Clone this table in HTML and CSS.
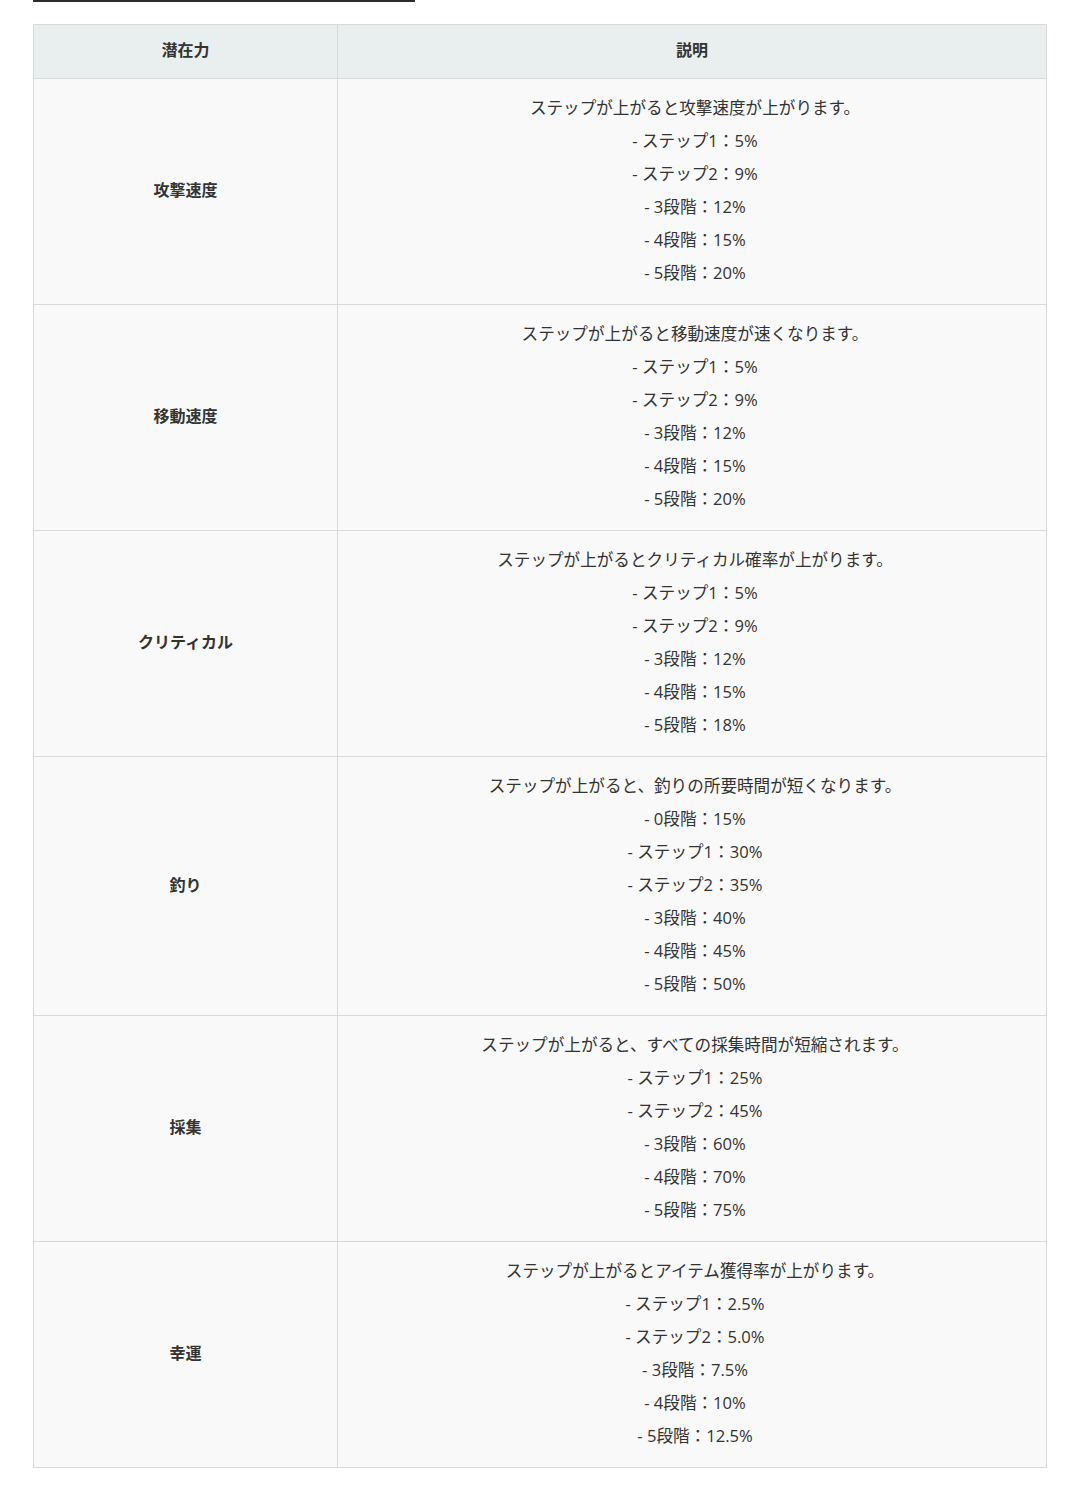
FILE: index.html
```html
<!DOCTYPE html>
<html lang="ja">
<head>
<meta charset="utf-8">
<link rel="stylesheet" href="styles.css">
</head>
<body>
<div class="page">
  <div class="rule"></div>
  <table class="pot">
    <colgroup><col class="c1"><col class="c2"></colgroup>
    <thead>
      <tr><th>潜在力</th><th>説明</th></tr>
    </thead>
    <tbody>
      <tr><td class="name">攻撃速度</td><td class="desc">ステップが上がると攻撃速度が上がります。<br>- ステップ1：5%<br>- ステップ2：9%<br>- 3段階：12%<br>- 4段階：15%<br>- 5段階：20%</td></tr>
      <tr><td class="name">移動速度</td><td class="desc">ステップが上がると移動速度が速くなります。<br>- ステップ1：5%<br>- ステップ2：9%<br>- 3段階：12%<br>- 4段階：15%<br>- 5段階：20%</td></tr>
      <tr><td class="name">クリティカル</td><td class="desc">ステップが上がるとクリティカル確率が上がります。<br>- ステップ1：5%<br>- ステップ2：9%<br>- 3段階：12%<br>- 4段階：15%<br>- 5段階：18%</td></tr>
      <tr><td class="name">釣り</td><td class="desc">ステップが上がると、釣りの所要時間が短くなります。<br>- 0段階：15%<br>- ステップ1：30%<br>- ステップ2：35%<br>- 3段階：40%<br>- 4段階：45%<br>- 5段階：50%</td></tr>
      <tr><td class="name">採集</td><td class="desc">ステップが上がると、すべての採集時間が短縮されます。<br>- ステップ1：25%<br>- ステップ2：45%<br>- 3段階：60%<br>- 4段階：70%<br>- 5段階：75%</td></tr>
      <tr><td class="name">幸運</td><td class="desc">ステップが上がるとアイテム獲得率が上がります。<br>- ステップ1：2.5%<br>- ステップ2：5.0%<br>- 3段階：7.5%<br>- 4段階：10%<br>- 5段階：12.5%</td></tr>
    </tbody>
  </table>
</div>
</body>
</html>
```

FILE: styles.css
```css
html, body {
  margin: 0;
  padding: 0;
  background: #ffffff;
}
body {
  font-family: "Open Sans", "Noto Sans CJK JP", sans-serif;
  color: #333333;
  font-size: 16px;
}
.page {
  padding: 0 34px 0 33px;
}
.rule {
  width: 382px;
  height: 2px;
  background: #2b2b2b;
  margin-bottom: 22px;
}
.pot {
  width: 1014px;
  border-collapse: collapse;
  table-layout: fixed;
}
.c1 { width: 304px; }
.c2 { width: 709px; }
.pot th, .pot td {
  border: 1px solid #d9d9d9;
  text-align: center;
  vertical-align: middle;
}
.pot th {
  background: #e9eeee;
  font-weight: 700;
  height: 50px;
  padding: 0 0 3px;
  line-height: 24px;
  color: #333;
}
.pot td {
  background: #f9f9f9;
}
.pot td.name {
  font-weight: 700;
  padding: 0 0 5px;
}
.pot td.desc {
  font-size: 16.6px;
  line-height: 33px;
  padding: 12px 10px 15px 16px;
}
```
